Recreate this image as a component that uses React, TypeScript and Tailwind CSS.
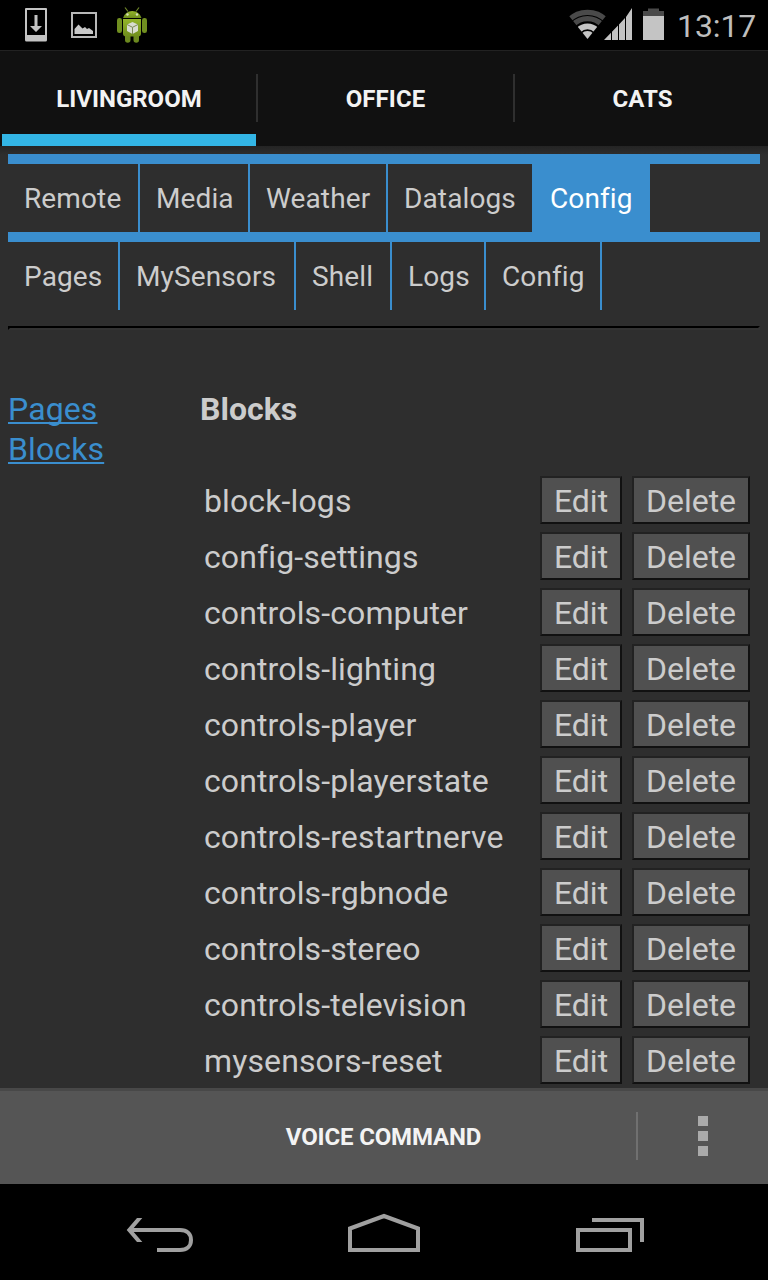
import React from "react";

const blocks = [
  "block-logs",
  "config-settings",
  "controls-computer",
  "controls-lighting",
  "controls-player",
  "controls-playerstate",
  "controls-restartnerve",
  "controls-rgbnode",
  "controls-stereo",
  "controls-television",
  "mysensors-reset",
];

const primaryNav = [
  { label: "Remote", width: "w-[132px]" },
  { label: "Media", width: "w-[110px]" },
  { label: "Weather", width: "w-[138px]" },
  { label: "Datalogs", width: "w-[146px]" },
  { label: "Config", width: "w-[116px]", active: true },
];

const secondaryNav = [
  { label: "Pages", width: "w-[112px]" },
  { label: "MySensors", width: "w-[176px]" },
  { label: "Shell", width: "w-[96px]" },
  { label: "Logs", width: "w-[94px]" },
  { label: "Config", width: "w-[116px]" },
];

function StatusBar() {
  return (
    <header className="flex h-[50px] shrink-0 items-start bg-black">
      <svg width="160" height="50" viewBox="0 0 160 50">
        <path fillRule="evenodd" fill="#c4c4c4" d="M26 8h20a1 1 0 0 1 1 1v31a1.500 1.500 0 0 1-1.500 1.500h-19A1.500 1.500 0 0 1 25 40V9a1 1 0 0 1 1-1zm1 2v25h18V10z" />
        <path fill="#c4c4c4" d="M34.500 15h3v11H42l-6 6-6-6h4.500z" />
        <path fillRule="evenodd" fill="#b8b8b8" d="M71 12h26v26H71zm2 2v22h22V14z" />
        <path fill="#c8c8c8" d="M74.500 34v-5l4-4.500 4 4 2.500-1.500 2 2 2-1 4 3v3z" />
        <defs>
          <linearGradient id="droid" x1="0" x2="0" y1="0" y2="1">
            <stop offset="0" stopColor="#94b52a" />
            <stop offset="1" stopColor="#6f8e1c" />
          </linearGradient>
        </defs>
        <path d="M125 7.500l3 4M139 7.500l-3 4" stroke="#6f8728" strokeWidth="1.200" />
        <path fill="url(#droid)" d="M123 18a9.500 9 0 0 1 18.500 0z" />
        <rect x="117" y="18" width="5" height="15" rx="2.300" fill="#718f20" />
        <rect x="142" y="18" width="5" height="15" rx="2.300" fill="#718f20" />
        <path fill="#6c891f" d="M125 34h5.500v6a2.500 2.500 0 0 1-5.500 0zm8.500 0h5.500v6a2.500 2.500 0 0 1-5.500 0z" />
        <path fill="url(#droid)" d="M123 19h18v14.500a3 3 0 0 1-3 3h-12a3 3 0 0 1-3-3z" />
        <circle cx="127.500" cy="14.500" r="1.200" fill="#d6dfbc" />
        <circle cx="137" cy="14.500" r="1.200" fill="#d6dfbc" />
        <path fill="#d9ddd0" d="M132.500 22l5.500 2.500v6.500l-5.500 3-5.500-3v-6.500z" />
        <path d="M127 24.500l5.500 2.800 5.500-2.800M132.500 27.300V34" fill="none" stroke="#7b8a55" strokeWidth="1" />
      </svg>
      <svg className="ml-[400px]" width="110" height="50" viewBox="560 0 110 50">
        <clipPath id="fan">
          <path d="M587.500 39L567.500 14Q587.500 3 607.500 14z" />
        </clipPath>
        <g clipPath="url(#fan)" fill="none">
          <circle cx="587.500" cy="39" r="26.700" stroke="#4a4a4a" strokeWidth="5.200" />
          <circle cx="587.500" cy="39" r="20.300" stroke="#4a4a4a" strokeWidth="5.200" />
          <circle cx="587.500" cy="39" r="12.600" stroke="#c4c4c4" strokeWidth="5.800" />
          <circle cx="587.500" cy="39" r="8" fill="#c4c4c4" />
        </g>
        <path fill="#c4c4c4" d="M604 40l7-7.300V40zM612 31.700l6-6.300V40h-6zM619 24.400l6-6.300V40h-6zM626 17l6-9v32h-6z" />
        <path fill="#4a4a4a" d="M648 8.500h11V11h5v5h-21v-5h5z" />
        <path fill="#c4c4c4" d="M643 16h21v24h-21z" />
      </svg>
      <span className="ml-[7px] pt-px text-[32px] leading-[50px] tracking-[-0.1px] text-[#bebebe]">13:17</span>
    </header>
  );
}

function RoomTabs() {
  return (
    <nav className="flex h-24 shrink-0 border-t border-[#222] bg-[#111] text-2xl font-bold text-[#f3f3f3]">
      <div className="flex w-64 flex-col pl-0.5">
        <span className="flex h-[83px] items-center justify-center pt-3">LIVINGROOM</span>
        <span className="h-3 bg-[#33b5e5]" />
      </div>
      <span className="mt-[23px] h-12 w-0.5 bg-[#2f2f2f]" />
      <span className="flex h-[83px] w-[255px] items-center justify-center pt-3 tracking-[0.1px]">OFFICE</span>
      <span className="mt-[23px] h-12 w-0.5 bg-[#2f2f2f]" />
      <span className="flex h-[83px] w-[253px] items-center justify-center pt-3 pl-0.5">CATS</span>
    </nav>
  );
}

type NavItem = { label: string; width: string; active?: boolean };

function LinkRow({ items }: { items: NavItem[] }) {
  return (
    <nav className="flex h-[78px] border-t-[10px] border-[#3a8ece] text-[28px] tracking-[0.12px]">
      {items.map((item) => (
        <a
          key={item.label}
          className={`${item.width} flex items-center border-r-2 border-[#3a8ece] pt-0.5 pl-4 ${item.active ? "bg-[#3a8ece] text-white" : ""}`}
        >
          {item.label}
        </a>
      ))}
    </nav>
  );
}

function ActionButton({ label, className }: { label: string; className: string }) {
  return (
    <button className={`${className} flex h-12 items-center justify-center border-2 border-t-[#222] border-r-[#111] border-b-[#111] border-l-[#222] bg-[#505050] pt-0.5`}>
      {label}
    </button>
  );
}

function Content() {
  return (
    <main className="flex h-[942px] shrink-0 flex-col overflow-hidden bg-[linear-gradient(#242424_0px,#2e2e2e_9px)] px-2 pt-2 text-[#ccc]">
      <LinkRow items={primaryNav} />
      <LinkRow items={secondaryNav} />
      <hr className="mt-4 h-1 border-2 border-t-black border-r-[#333] border-b-[#333] border-l-black" />
      <div className="flex pt-[59px] text-[32px]">
        <aside className="flex w-48 flex-col items-start leading-10 tracking-[0.12px] text-[#3a8ece]">
          <a className="underline decoration-2 underline-offset-2 [text-decoration-skip-ink:none]">Pages</a>
          <a className="underline decoration-2 underline-offset-2 [text-decoration-skip-ink:none]">Blocks</a>
        </aside>
        <section className="flex-1">
          <h2 className="h-[87px] font-bold leading-10">Blocks</h2>
          <ul className="flex flex-col gap-2">
            {blocks.map((name) => (
              <li key={name} className="flex h-12 items-center pl-1">
                <span className="w-[336px] pt-0.5 tracking-[0.12px]">{name}</span>
                <ActionButton label="Edit" className="mr-2.5 w-[82px]" />
                <ActionButton label="Delete" className="w-[118px]" />
              </li>
            ))}
          </ul>
        </section>
      </div>
    </main>
  );
}

function CommandBar() {
  return (
    <footer className="flex h-24 shrink-0 items-center border-t-[3px] border-[#484848] bg-[#555]">
      <span className="w-[636px] pb-px pl-[131px] text-center text-2xl font-bold tracking-[-0.15px] text-[#f3f3f3]">VOICE COMMAND</span>
      <span className="mb-[3px] h-12 w-0.5 bg-[#707070]" />
      <span className="mb-[3px] ml-[60px] flex flex-col gap-[5px]">
        <i className="size-2.5 bg-[#aaa]" />
        <i className="size-2.5 bg-[#aaa]" />
        <i className="size-2.5 bg-[#aaa]" />
      </span>
    </footer>
  );
}

function SystemKeys() {
  return (
    <div className="flex h-24 shrink-0 bg-black">
      <svg width="768" height="96" viewBox="0 1184 768 96" fill="none" stroke="#a0a0a0" strokeWidth="4">
        <path d="M130 1230H180C187 1230 191 1234 191 1240S187 1250 180 1250H157" />
        <path fill="#a0a0a0" stroke="none" d="M126.700 1230L137 1218H142.300L132 1230L142.300 1242H137z" />
        <path d="M350 1228.500L384 1216L418 1228.500V1250H350z" />
        <path d="M578 1230h52v20h-52zM592 1220h50v22" />
      </svg>
    </div>
  );
}

export default function App() {
  return (
    <div className="flex h-[1280px] w-[768px] flex-col overflow-hidden bg-black font-['Roboto','Liberation_Sans',sans-serif]">
      <StatusBar />
      <RoomTabs />
      <Content />
      <CommandBar />
      <SystemKeys />
    </div>
  );
}
